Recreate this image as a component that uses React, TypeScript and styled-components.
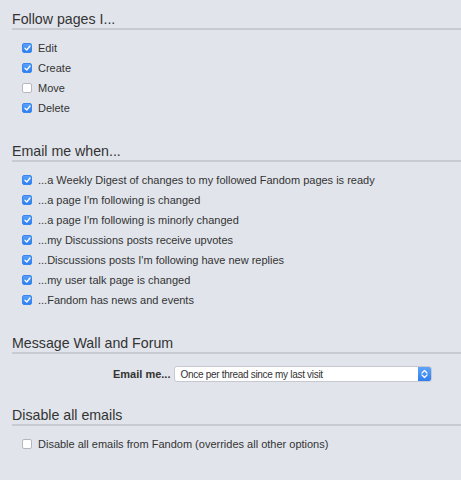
import * as React from "react";
import styled, { createGlobalStyle } from "styled-components";

const GlobalStyle = createGlobalStyle`
	html, body {
		margin: 0;
		padding: 0;
		background-color: #e1e5eb;
	}

	body {
		font-family: "Liberation Sans", Arial, sans-serif;
		color: #333333;
	}
`;

const Page = styled.div`
	width: 461px;
	height: 480px;
	overflow: hidden;
	padding-top: 11px;
	box-sizing: border-box;
`;

const Section = styled.section`
	margin-bottom: 25px;
`;

const Heading = styled.h2`
	margin: 0 0 0 12px;

	font-size: 14.2px;
	font-weight: normal;
	line-height: 17px;
	color: #333333;

	border-bottom: 2px solid #c8ccd2;
`;

const OptionList = styled.ul`
	list-style: none;
	margin: 8px 0 0 0;
	padding: 0 0 0 22px;
`;

const OptionRow = styled.li`
	display: flex;
	align-items: center;
	gap: 6px;

	height: 20px;

	font-size: 11px;
`;

const Box = styled.span<{ checked: boolean }>`
	display: flex;
	align-items: center;
	justify-content: center;

	width: 10px;
	height: 10px;

	background: ${(props) =>
		props.checked ? "linear-gradient(#5aa1f8, #2f7ff0)" : "#ffffff"};
	border: 1px solid ${(props) => (props.checked ? "#3a86ee" : "#b4b8be")};
	border-radius: 2px;
	box-sizing: border-box;
`;

const SelectRow = styled.div`
	display: flex;
	align-items: center;
	gap: 4px;

	margin-top: 12px;
	padding-left: 113px;

	label {
		font-size: 11px;
		font-weight: bold;
	}
`;

const FakeSelect = styled.div`
	display: flex;
	align-items: center;
	justify-content: space-between;

	width: 256px;
	height: 14px;

	background-color: #ffffff;
	border: 1px solid #c6cad0;
	border-radius: 3px;
	box-sizing: content-box;

	font-size: 10px;
	letter-spacing: -0.3px;

	span {
		padding-left: 5px;
	}

	.select__arrows {
		display: flex;
		align-items: center;
		justify-content: center;

		width: 13px;
		height: 14px;

		background: linear-gradient(#5ea4f8, #2f7ff0);
		border-radius: 0 2px 2px 0;
	}
`;

const Check = (props: { checked: boolean }): JSX.Element => (
	<Box checked={props.checked}>
		{props.checked && (
			<svg width="7" height="6" viewBox="0 0 7 6">
				<path
					d="M1 3.2 L2.8 5 L6 1"
					fill="none"
					stroke="#ffffff"
					strokeWidth="1.3"
					strokeLinecap="round"
					strokeLinejoin="round"
				/>
			</svg>
		)}
	</Box>
);

const Option = (props: { text: string; checked: boolean }): JSX.Element => (
	<OptionRow>
		<Check checked={props.checked} />
		<span>{props.text}</span>
	</OptionRow>
);

const followOptions = [
	{ text: "Edit", checked: true },
	{ text: "Create", checked: true },
	{ text: "Move", checked: false },
	{ text: "Delete", checked: true },
];

const emailOptions = [
	"...a Weekly Digest of changes to my followed Fandom pages is ready",
	"...a page I'm following is changed",
	"...a page I'm following is minorly changed",
	"...my Discussions posts receive upvotes",
	"...Discussions posts I'm following have new replies",
	"...my user talk page is changed",
	"...Fandom has news and events",
];

const App = (): JSX.Element => (
	<Page>
		<GlobalStyle />
		<Section>
			<Heading>Follow pages I...</Heading>
			<OptionList>
				{followOptions.map((option) => (
					<Option key={option.text} text={option.text} checked={option.checked} />
				))}
			</OptionList>
		</Section>
		<Section>
			<Heading>Email me when...</Heading>
			<OptionList>
				{emailOptions.map((text) => (
					<Option key={text} text={text} checked />
				))}
			</OptionList>
		</Section>
		<Section>
			<Heading>Message Wall and Forum</Heading>
			<SelectRow>
				<label>Email me...</label>
				<FakeSelect>
					<span>Once per thread since my last visit</span>
					<div className="select__arrows">
						<svg width="7" height="10" viewBox="0 0 7 10">
							<path
								d="M1 4 L3.5 1.5 L6 4 M1 6 L3.5 8.5 L6 6"
								fill="none"
								stroke="#ffffff"
								strokeWidth="1.2"
								strokeLinecap="round"
								strokeLinejoin="round"
							/>
						</svg>
					</div>
				</FakeSelect>
			</SelectRow>
		</Section>
		<Section>
			<Heading>Disable all emails</Heading>
			<OptionList>
				<Option text="Disable all emails from Fandom (overrides all other options)" checked={false} />
			</OptionList>
		</Section>
	</Page>
);

export default App;
